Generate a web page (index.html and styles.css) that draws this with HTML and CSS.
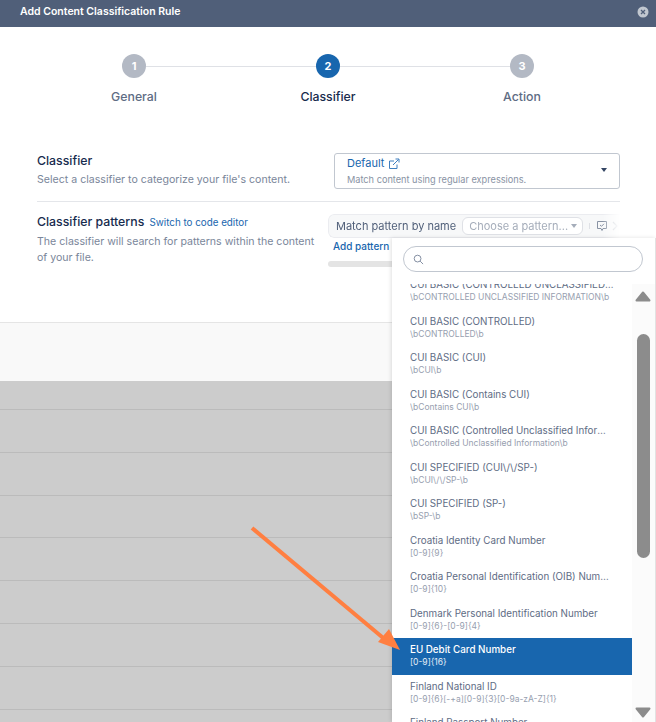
FILE: index.html
```html
<!DOCTYPE html>
<html lang="en">
<head>
<meta charset="utf-8">
<title>Add Content Classification Rule</title>
<link rel="stylesheet" href="styles.css">
</head>
<body>
<div class="page">
  <header class="modal-head">
    <span class="modal-title">Add Content Classification Rule</span>
    <svg class="close" viewBox="0 0 12 12" width="12" height="12"><circle cx="6" cy="6" r="5.5" fill="#c1c7d0"/><path d="M4 4l4 4M8 4l-4 4" stroke="#505f79" stroke-width="1.3"/></svg>
  </header>
  <section class="stepper">
    <div class="step-dots">
      <span class="dot">1</span><span class="step-line"></span>
      <span class="dot active">2</span><span class="step-line"></span>
      <span class="dot">3</span>
    </div>
    <div class="step-labels">
      <span>General</span><span class="current">Classifier</span><span>Action</span>
    </div>
  </section>
  <section class="form">
    <div class="field first">
      <div class="field-text">
        <div class="field-name">Classifier</div>
        <p class="field-desc">Select a classifier to categorize your file's content.</p>
      </div>
      <div class="select">
        <div class="select-name">Default
          <svg viewBox="0 0 12 12" width="12" height="12"><path d="M9 6.5V10.5H1.5V3H6" fill="none" stroke="#3f7fbf" stroke-width="1"/><path d="M5 7l5.5-5.5M7.5 1h3.5v3.5" fill="none" stroke="#3f7fbf" stroke-width="1"/></svg>
        </div>
        <div class="select-sub">Match content using regular expressions.</div>
        <span class="caret"></span>
      </div>
    </div>
    <div class="field second">
      <div class="field-text wide">
        <div class="field-name">Classifier patterns <a class="switch">Switch to code editor</a></div>
        <p class="field-desc">The classifier will search for patterns within the content of your file.</p>
      </div>
      <div class="patterns">
        <div class="pattern-box">
          <span class="pattern-label">Match pattern by name</span>
          <span class="pattern-choose">Choose a pattern...<i class="mini-caret"></i></span>
          <span class="tick"></span>
          <svg class="chat" viewBox="0 0 12 12" width="12" height="12"><path d="M1.5 1.5h9v7H7L6 10.5 5 8.5H1.500z" fill="none" stroke="#8993a4" stroke-width="1"/><path d="M4 5l1.500 1.300L8 3.800" fill="none" stroke="#8993a4" stroke-width="1"/></svg>
          <svg class="chev" viewBox="0 0 6 10" width="6" height="10"><path d="M1 1l4 4-4 4" fill="none" stroke="#c1c7d0" stroke-width="1.200"/></svg>
        </div>
        <a class="add-pattern">Add pattern</a>
        <div class="hscroll"></div>
      </div>
    </div>
  </section>
  <footer class="modal-foot"></footer>
  <div class="backdrop">
    <div class="bg-row top"></div><div class="bg-row"></div><div class="bg-row"></div><div class="bg-row"></div><div class="bg-row"></div><div class="bg-row"></div><div class="bg-row"></div><div class="bg-row"></div>
  </div>

  <div class="dropdown">
    <div class="search-wrap">
      <div class="search">
        <svg viewBox="0 0 12 12" width="11" height="11"><circle cx="5" cy="5" r="3.700" fill="none" stroke="#7a869a" stroke-width="1"/><path d="M7.800 7.800L11 11" stroke="#7a869a" stroke-width="1"/></svg>
      </div>
    </div>
    <div class="list-wrap">
      <ul class="list">
        <li><b>CUI BASIC (CONTROLLED UNCLASSIFIED INFORMATION)</b><small>\bCONTROLLED UNCLASSIFIED INFORMATION\b</small></li>
        <li><b>CUI BASIC (CONTROLLED)</b><small>\bCONTROLLED\b</small></li>
        <li><b>CUI BASIC (CUI)</b><small>\bCUI\b</small></li>
        <li><b>CUI BASIC (Contains CUI)</b><small>\bContains CUI\b</small></li>
        <li><b>CUI BASIC (Controlled Unclassified Information)</b><small>\bControlled Unclassified Information\b</small></li>
        <li><b>CUI SPECIFIED (CUI\/\/SP-)</b><small>\bCUI\/\/SP-\b</small></li>
        <li><b>CUI SPECIFIED (SP-)</b><small>\bSP-\b</small></li>
        <li><b>Croatia Identity Card Number</b><small>[0-9]{9}</small></li>
        <li><b>Croatia Personal Identification (OIB) Number</b><small>[0-9]{10}</small></li>
        <li><b>Denmark Personal Identification Number</b><small>[0-9]{6}-[0-9]{4}</small></li>
        <li class="selected"><b>EU Debit Card Number</b><small>[0-9]{16}</small></li>
        <li><b>Finland National ID</b><small>[0-9]{6}[-+a][0-9]{3}[0-9a-zA-Z]{1}</small></li>
        <li><b>Finland Passport Number</b><small>[A-Z]{2}[0-9]{7}</small></li>
      </ul>
      <div class="scrollbar">
        <svg class="sb-up" viewBox="0 0 16 11" width="16" height="11"><path d="M8 1.500L14.500 9.500H1.500z" fill="#8c8c8c" stroke="#8c8c8c" stroke-width="2" stroke-linejoin="round"/></svg>
        <span class="sb-thumb"></span>
        <svg class="sb-down" viewBox="0 0 16 11" width="16" height="11"><path d="M8 9.500L14.500 1.500H1.500z" fill="#8c8c8c" stroke="#8c8c8c" stroke-width="2" stroke-linejoin="round"/></svg>
      </div>
    </div>
  </div>

  <svg class="arrow" viewBox="0 0 656 722" width="656" height="722"><path d="M252 528L388 642" stroke="#ff7f41" stroke-width="4" fill="none"/><path d="M400 650L378 642L389 629z" fill="#ff7f41"/></svg>
</div>
</body>
</html>
```
FILE: styles.css
```css
* { box-sizing: border-box; }
html, body { margin: 0; padding: 0; }
body { font-family: Inter, "Liberation Sans", sans-serif; background: #fff; }
.page { position: relative; width: 656px; height: 722px; overflow: hidden; display: flex; flex-direction: column; background: #fff; }

.modal-head { height: 27px; flex: none; background: #505f79; display: flex; align-items: center; justify-content: space-between; padding: 0 7px 3px 20px; }
.modal-title { color: #fff; font-size: 10.500px; font-weight: 600; line-height: 24px; }
.close { display: block; }

.stepper { flex: none; padding: 27px 122px 0; height: 86px; }
.step-dots { display: flex; align-items: center; }
.dot { width: 24px; height: 24px; flex: none; border-radius: 50%; background: #b3b9c4; color: #fff; font-size: 11px; font-weight: 700; display: flex; align-items: center; justify-content: center; }
.dot.active { background: #1866ae; }
.step-line { flex: 1; height: 1px; background: #dfe1e6; }
.step-labels { display: grid; grid-template-columns: repeat(3, 194px); margin: 11px -85px 0; text-align: center; font-size: 12.300px; font-weight: 500; line-height: 16px; color: #5e6c84; }
.step-labels .current { color: #172b4d; }

.form { flex: none; height: 209px; padding: 40px 36px 0 37px; }
.field { display: flex; }
.field.first { height: 49px; border-bottom: 1px solid #e4e6ea; justify-content: space-between; }
.field.second { padding-top: 12px; }
.field-text { width: 280px; }
.field-text.wide { width: 291px; flex: none; }
.field-name { font-size: 12.300px; font-weight: 500; color: #172b4d; line-height: 16px; }
.field-desc { margin: 3px 0 0; max-width: 283px; font-size: 10.600px; line-height: 16px; color: #7a869a; }
.switch { font-size: 9.800px; color: #1866ae; margin-left: 2px; font-weight: 400; }

.select { position: relative; width: 286px; height: 36px; border: 1px solid #c1c7d0; border-radius: 3px; padding: 2px 0 0 12px; }
.select-name { display: flex; align-items: center; gap: 4px; font-size: 11px; line-height: 15px; color: #1866ae; }
.select-sub { font-size: 9.200px; line-height: 14px; margin-top: 2px; color: #8993a4; }
.caret { position: absolute; right: 12px; top: 14px; border: 3.500px solid transparent; border-top: 4px solid #344563; border-bottom: 0; }

.patterns { width: 292px; flex: none; }
.pattern-box { display: flex; align-items: center; height: 24px; width: 292px; background: #f7f8f9; border: 1px solid #ebecf0; border-right: 0; border-radius: 6px 0 0 6px; padding: 0 0 1px 7px; mask-image: linear-gradient(to right, #000 94%, transparent 100%); }
.pattern-label { font-size: 11px; color: #505f79; white-space: nowrap; }
.pattern-choose { margin-left: 6px; width: 121px; height: 18px; flex: none; border: 1px solid #dfe1e6; border-radius: 6px; background: #fff; color: #a5adba; font-size: 11px; line-height: 16px; padding-left: 6px; display: flex; align-items: center; white-space: nowrap; gap: 3px; }
.mini-caret { border: 3.500px solid transparent; border-top: 4px solid #a5adba; border-bottom: 0; }
.tick { width: 1px; height: 6px; background: #dfe1e6; margin: 0 6px; flex: none; }
.chat { flex: none; }
.chev { flex: none; margin-left: 4px; }
.add-pattern { display: block; font-size: 10px; line-height: 14px; color: #1866ae; font-weight: 500; margin: 1px 0 0 5px; }
.hscroll { height: 6px; width: 70px; margin-top: 8px; background: #e4e4e4; border-radius: 3px; }

.modal-foot { flex: none; height: 59px; background: #f9f9f9; border-top: 1px solid #e5e5e5; }

.backdrop { flex: 1; background: #ccc; overflow: hidden; }
.bg-row { height: 42.800px; border-bottom: 1px solid #bbb; }
.bg-row.top { height: 29px; }

.dropdown { position: absolute; left: 392px; top: 238px; width: 264px; height: 484px; background: #fff; border-right: 1px solid #e2e2e2; box-shadow: -1px 0 4px rgba(0,0,0,.12); display: flex; flex-direction: column; }
.search-wrap { flex: none; height: 46px; padding: 8px 12px 0 11px; }
.search { height: 26px; border: 1px solid #c1c7d0; border-radius: 13px; display: flex; align-items: center; padding-left: 9px; background: #fff; }
.search svg { display: block; }
.list-wrap { flex: 1; display: flex; min-height: 0; overflow: hidden; }
.list { list-style: none; margin: -11px 0 0; padding: 0; width: 240px; flex: none; }
.list li { height: 36.500px; padding: 5px 18px 0 18px; }
.list b { display: block; font-size: 9.800px; font-weight: 400; line-height: 13px; color: #5e6c84; white-space: nowrap; overflow: hidden; text-overflow: ellipsis; }
.list small { display: block; font-size: 8.500px; line-height: 11px; margin-top: 1px; color: #97a0af; white-space: nowrap; overflow: hidden; text-overflow: ellipsis; }
.list li.selected { background: #1866ae; }
.list li.selected b { color: #fff; font-weight: 500; }
.list li.selected small { color: #e4edf6; }

.scrollbar { flex: 1; background: #fbfbfb; display: flex; flex-direction: column; align-items: center; padding-right: 1px; }
.sb-up { flex: none; margin-top: 7px; }
.sb-thumb { flex: none; width: 13px; height: 224px; margin-top: 32px; background: #8c8c8c; border-radius: 7px; }
.sb-down { flex: none; margin-top: 149px; }

.arrow { position: absolute; left: 0; top: 0; pointer-events: none; }
```
